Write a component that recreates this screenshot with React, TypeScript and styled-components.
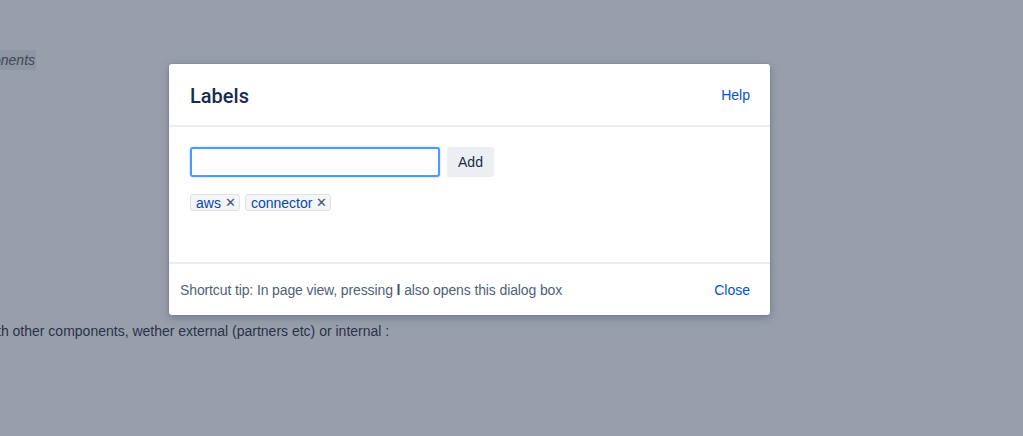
import React from "react";
import styled, { createGlobalStyle } from "styled-components";

const Global = createGlobalStyle`
  html, body { margin: 0; padding: 0; }
  body {
    background: #989fab;
    font-family: "Liberation Sans", Arial, sans-serif;
    width: 1023px;
    height: 436px;
    overflow: hidden;
    position: relative;
  }
`;

const Page = styled.div`
  display: flex;
  flex-direction: column;
  padding-top: 50px;
`;

const Faded = styled.p<{ $top: number; $shift: number }>`
  margin: ${(p) => p.$top}px 0 0 ${(p) => p.$shift}px;
  font-size: 14px;
  line-height: 20px;
  color: #283249;
  white-space: nowrap;
`;

const Emph = styled.span`
  display: inline-block;
  padding: 0 1px 0 0;
  background: #8f96a3;
  font-style: italic;
  color: #3f4656;
`;

const Dialog = styled.div`
  position: absolute;
  left: 169px;
  top: 64px;
  width: 601px;
  background: #ffffff;
  border-radius: 3px;
  box-shadow: 0 0 0 1px rgba(9, 30, 66, 0.06), 0 3px 8px rgba(9, 30, 66, 0.25);
  display: flex;
  flex-direction: column;
`;

const Header = styled.header`
  height: 61px;
  display: flex;
  align-items: center;
  justify-content: space-between;
  padding: 0 20px 0 21px;
  border-bottom: 2px solid #ebecf0;
`;

const Title = styled.h2`
  margin: 0;
  font-family: Roboto, "Liberation Sans", sans-serif;
  font-size: 20px;
  font-weight: 500;
  color: #172b4d;
  padding-top: 2px;
`;

const Link = styled.a`
  font-size: 14px;
  color: #0052cc;
  text-decoration: none;
  cursor: pointer;
`;

const Body = styled.div`
  height: 115px;
  padding: 20px 20px 0 21px;
  display: flex;
  flex-direction: column;
  gap: 17px;
  border-bottom: 2px solid #ebecf0;
`;

const Row = styled.div`
  display: flex;
  gap: 7px;
`;

const Input = styled.input`
  box-sizing: border-box;
  width: 250px;
  height: 30px;
  border: 2px solid #4c9aff;
  border-radius: 3px;
  box-shadow: 0 0 2px rgba(76, 154, 255, 0.6);
  outline: none;
  padding: 0 6px;
  font-size: 14px;
  font-family: inherit;
`;

const Button = styled.button`
  height: 30px;
  width: 47px;
  border: none;
  border-radius: 3px;
  background: #edeef1;
  color: #172b4d;
  font-size: 14px;
  font-family: inherit;
  padding: 0;
`;

const Tags = styled.div`
  display: flex;
  gap: 5px;
`;

const Tag = styled.span`
  display: inline-flex;
  align-items: center;
  gap: 4px;
  height: 17px;
  padding: 0 3px 0 5px;
  background: #f4f5f7;
  border: 1px solid #dfe1e6;
  border-radius: 3px;
  font-size: 14px;
  color: #0747a6;
  box-sizing: border-box;
`;

const Remove = styled.span`
  font-size: 13px;
  color: #42526e;
  line-height: 1;
`;

const Footer = styled.footer`
  height: 51px;
  display: flex;
  align-items: center;
  justify-content: space-between;
  padding: 0 20px 0 11px;
`;

const Tip = styled.span`
  font-size: 14px;
  letter-spacing: -0.12px;
  color: #505f79;
  b { color: #42526e; }
`;

export default function App() {
  return (
    <>
      <Global />
      <Page>
        <Faded $top={0} $shift={-7}>
          <Emph>onents</Emph>
        </Faded>
        <Faded $top={251} $shift={-3}>
          th other components, wether external (partners etc) or internal :
        </Faded>
      </Page>
      <Dialog role="dialog">
        <Header>
          <Title>Labels</Title>
          <Link>Help</Link>
        </Header>
        <Body>
          <Row>
            <Input autoFocus={false} />
            <Button>Add</Button>
          </Row>
          <Tags>
            <Tag>
              aws <Remove>✕</Remove>
            </Tag>
            <Tag>
              connector <Remove>✕</Remove>
            </Tag>
          </Tags>
        </Body>
        <Footer>
          <Tip>
            Shortcut tip: In page view, pressing <b>l</b> also opens this dialog box
          </Tip>
          <Link>Close</Link>
        </Footer>
      </Dialog>
    </>
  );
}
